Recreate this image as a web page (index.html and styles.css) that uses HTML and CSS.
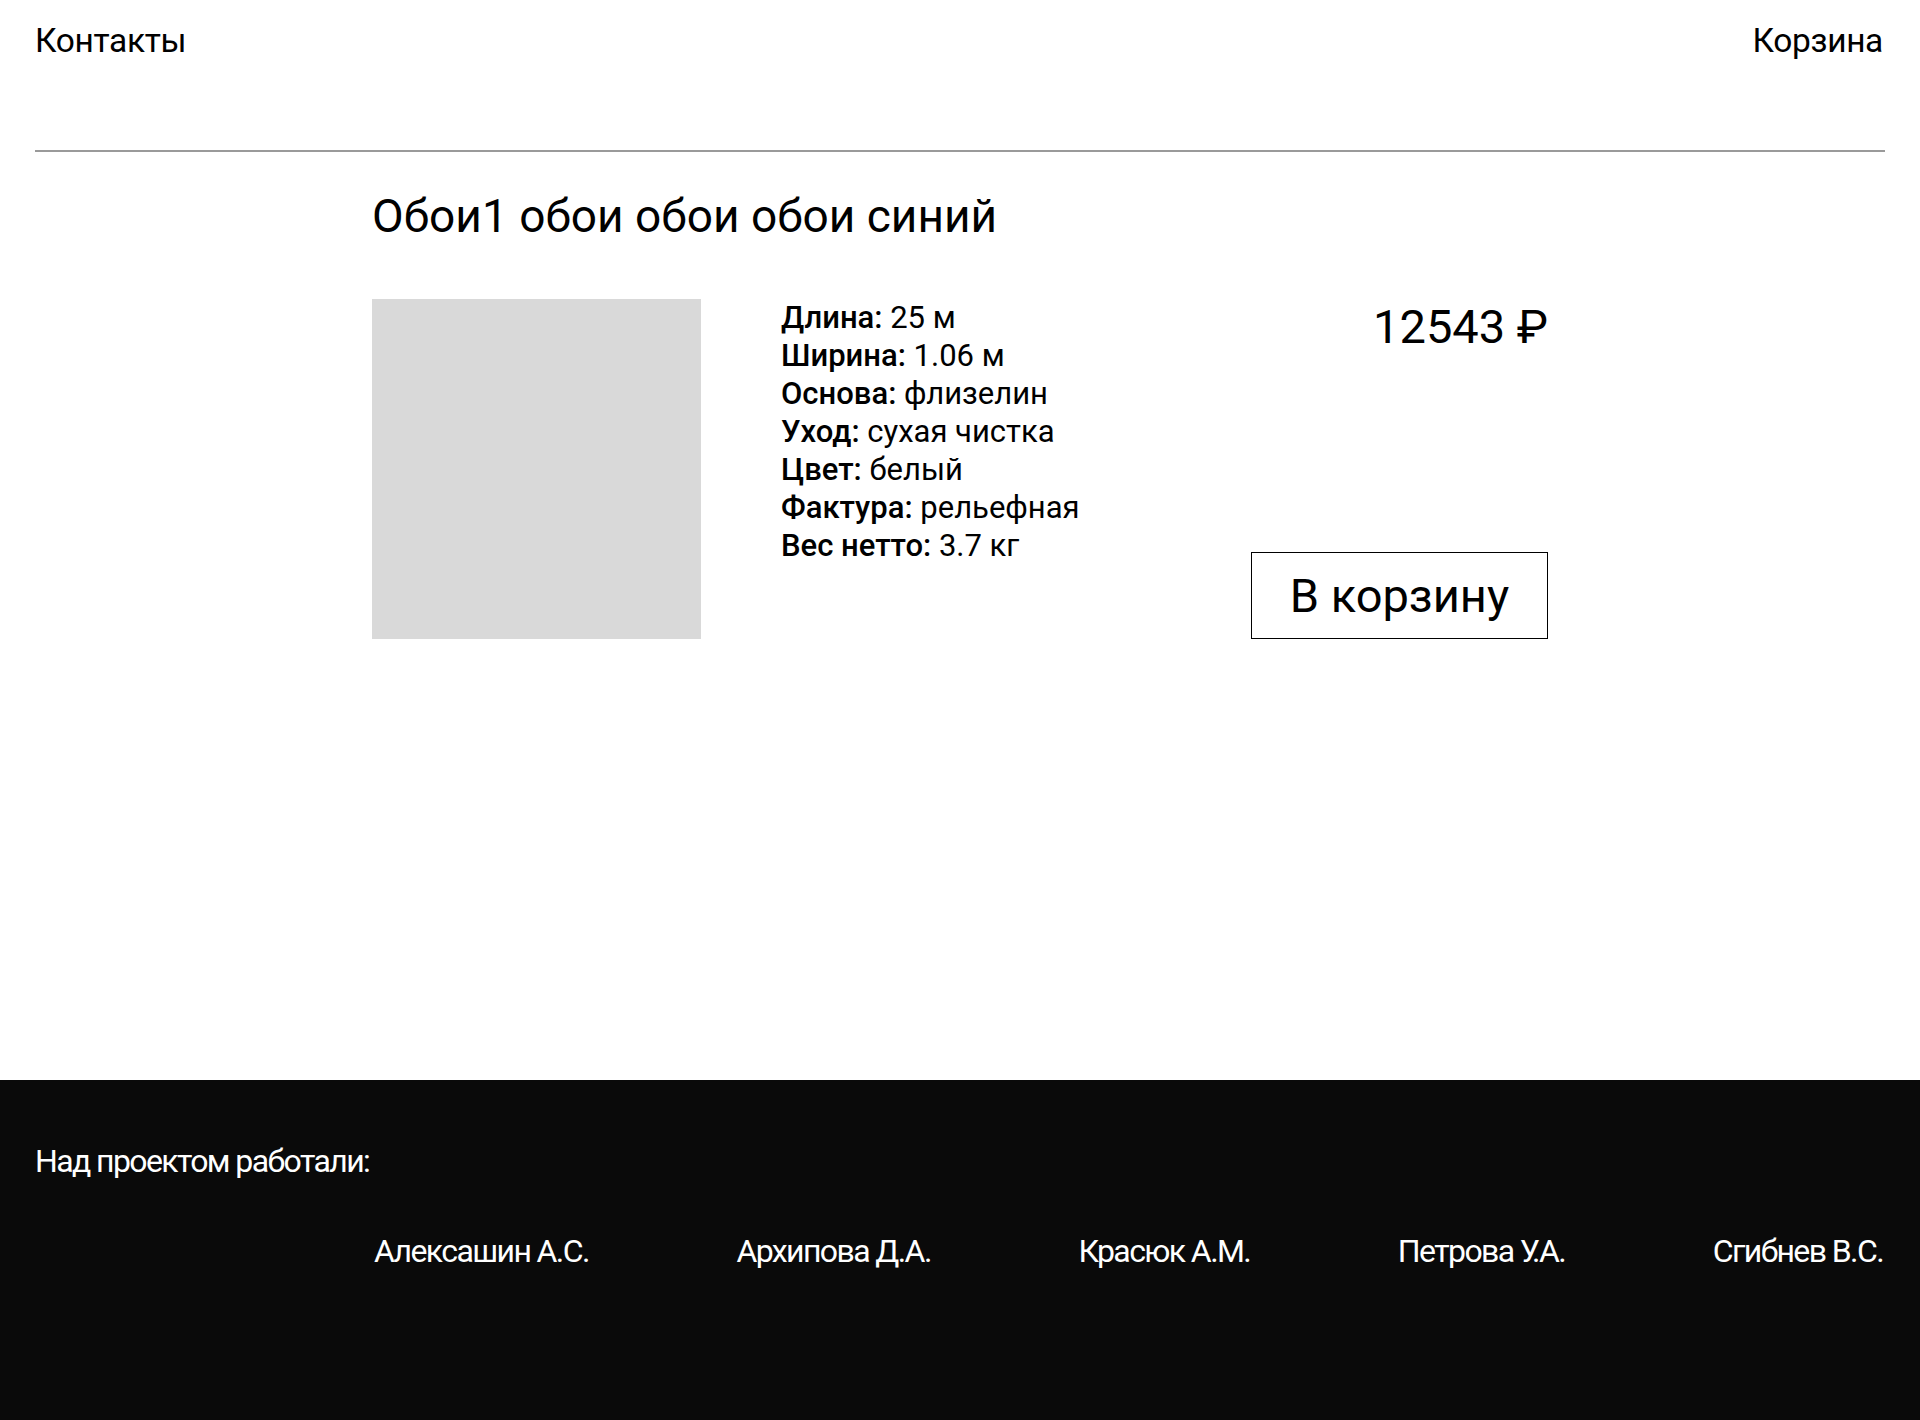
FILE: index.html
```html
<!DOCTYPE html>
<html lang="ru">
<head>
<meta charset="utf-8">
<title>Обои1 обои обои обои синий</title>
<link rel="stylesheet" href="styles.css">
</head>
<body>
<header class="header">
  <nav class="nav">
    <a class="nav-link" href="#">Контакты</a>
    <a class="nav-link" href="#">Корзина</a>
  </nav>
</header>
<main class="main">
  <div class="container">
    <h1 class="title">Обои1 обои обои обои синий</h1>
    <div class="product">
      <div class="product-image"></div>
      <ul class="specs">
        <li><b>Длина:</b> 25 м</li>
        <li><b>Ширина:</b> 1.06 м</li>
        <li><b>Основа:</b> флизелин</li>
        <li><b>Уход:</b> сухая чистка</li>
        <li><b>Цвет:</b> белый</li>
        <li><b>Фактура:</b> рельефная</li>
        <li><b>Вес нетто:</b> 3.7 кг</li>
      </ul>
      <div class="buy">
        <div class="price">12543 ₽</div>
        <button class="cart-btn">В корзину</button>
      </div>
    </div>
  </div>
</main>
<footer class="footer">
  <div class="footer-title">Над проектом работали:</div>
  <div class="authors">
    <span>Алексашин А.С.</span>
    <span>Архипова Д.А.</span>
    <span>Красюк А.М.</span>
    <span>Петрова У.А.</span>
    <span>Сгибнев В.С.</span>
  </div>
</footer>
</body>
</html>
```
FILE: styles.css
```css
* { box-sizing: border-box; }
html, body { margin: 0; padding: 0; }
body {
  font-family: Roboto, "Noto Sans", sans-serif;
  color: #000;
  background: #fff;
  min-height: 1420px;
  display: flex;
  flex-direction: column;
}
.header {
  padding: 21px 37px 0 35px;
}
.nav {
  display: flex;
  justify-content: space-between;
  height: 131px;
  border-bottom: 2px solid #9a9a9a;
  margin-right: -2px;
}
.nav-link {
  color: #000;
  text-decoration: none;
  font-size: 33.5px;
  letter-spacing: -0.01em;
  line-height: normal;
}
.nav-link:last-child { margin-right: 2px; }
.main { flex: 1; }
.container {
  width: 1176px;
  margin: 0 auto;
}
.title {
  margin: 37px 0 0;
  font-size: 46px;
  font-weight: 400;
  line-height: normal;
}
.product {
  display: flex;
  margin-top: 56px;
}
.product-image {
  width: 329px;
  height: 340px;
  background: #d9d9d9;
}
.specs {
  list-style: none;
  margin: 0 0 0 80px;
  padding: 0;
  font-size: 31px;
  line-height: 38px;
}
.specs b { font-weight: 500; }
.buy {
  margin-left: auto;
  width: 297px;
  display: flex;
  flex-direction: column;
  align-items: flex-end;
  justify-content: space-between;
}
.price {
  font-size: 47px;
  line-height: normal;
}
.cart-btn {
  width: 297px;
  height: 87px;
  border: 1px solid #000;
  background: #fff;
  font-family: Roboto, sans-serif;
  font-size: 47px;
  color: #000;
  padding: 0;
  cursor: pointer;
}
.footer {
  background: #0a0a0a;
  color: #fff;
  height: 340px;
  padding: 62px 37px 0 35px;
}
.footer-title,
.authors {
  font-size: 32px;
  letter-spacing: -0.05em;
  line-height: normal;
}
.authors {
  display: flex;
  justify-content: space-between;
  margin: 52px 0 0 339px;
}
```
